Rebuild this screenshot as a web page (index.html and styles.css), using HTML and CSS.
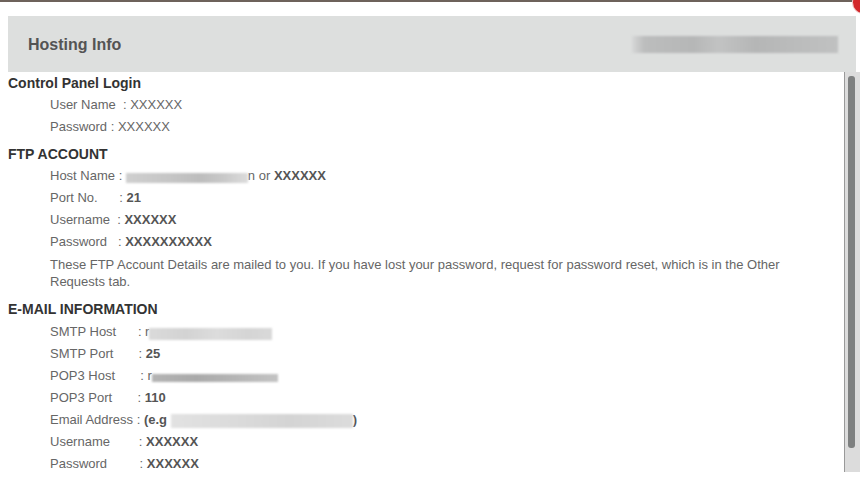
FILE: index.html
```html
<!doctype html>
<html>
  <head>
    <link rel="stylesheet" href="styles.css">
  </head>
  <body>
    <div class="topline"></div>
    <span class="close-dot"></span>

    <div class="panel-head">
      <h2>Hosting Info</h2>
      <span class="blur blur-domain"></span>
    </div>

    <div class="panel-body">
      <div class="content">
        <div class="section">
          <h3>Control Panel Login</h3>
          <div class="row">User Name&nbsp; : XXXXXX</div>
          <div class="row">Password : XXXXXX</div>
        </div>

        <div class="section">
          <h3>FTP ACCOUNT</h3>
          <div class="row">Host Name : <span class="blur blur-ftp"></span>n or <b>XXXXXX</b></div>
          <div class="row">Port No.&nbsp;&nbsp;&nbsp;&nbsp;&nbsp;&nbsp;: <b>21</b></div>
          <div class="row">Username&nbsp;&nbsp;: <b>XXXXXX</b></div>
          <div class="row">Password&nbsp;&nbsp;&nbsp;: <b>XXXXXXXXXX</b></div>
          <p class="note">These FTP Account Details are mailed to you. If you have lost your password, request for password reset, which is in the Other Requests tab.</p>
        </div>

        <div class="section">
          <h3>E-MAIL INFORMATION</h3>
          <div class="row">SMTP Host&nbsp;&nbsp;&nbsp;&nbsp;&nbsp;&nbsp;: r<span class="blur blur-smtp"></span></div>
          <div class="row">SMTP Port&nbsp;&nbsp;&nbsp;&nbsp;&nbsp;&nbsp;&nbsp;: <b>25</b></div>
          <div class="row">POP3 Host&nbsp;&nbsp;&nbsp;&nbsp;&nbsp;&nbsp;&nbsp;: r<span class="blur blur-pop"></span></div>
          <div class="row">POP3 Port&nbsp;&nbsp;&nbsp;&nbsp;&nbsp;&nbsp;&nbsp;: <b>110</b></div>
          <div class="row">Email Address : <b>(e.g <span class="blur blur-mail"></span>)</b></div>
          <div class="row">Username&nbsp;&nbsp;&nbsp;&nbsp;&nbsp;&nbsp;&nbsp;&nbsp;: <b>XXXXXX</b></div>
          <div class="row">Password&nbsp;&nbsp;&nbsp;&nbsp;&nbsp;&nbsp;&nbsp;&nbsp;&nbsp;: <b>XXXXXX</b></div>
        </div>
      </div>

      <div class="scrollbar">
        <div class="thumb"></div>
      </div>
    </div>
  </body>
</html>
```

FILE: styles.css
```css
* {
  box-sizing: border-box;
}

html {
  height: 100%;
}

body {
  margin: 0;
  height: 100%;
  background-color: #fff;
  font-family: "Liberation Sans", Arial, sans-serif;
  overflow: hidden;
  position: relative;
}

.topline {
  height: 2px;
  margin-right: 4px;
  background-color: #6d625b;
}

.close-dot {
  position: absolute;
  top: -8px;
  right: -14px;
  width: 21px;
  height: 21px;
  border-radius: 50%;
  background-color: #d3272a;
  box-shadow: 0 0 0 1px #f1c9c9;
}

.panel-head {
  display: flex;
  align-items: center;
  justify-content: space-between;
  height: 56px;
  margin: 14px 4px 0 8px;
  padding: 2px 18px 0 20px;
  background-color: #dddfde;
}

.panel-head h2 {
  margin: 0;
  font-size: 16px;
  font-weight: bold;
  color: #545454;
}

.panel-head .blur {
  margin-bottom: 2px;
}

.panel-body {
  display: flex;
  height: 400px;
}

.content {
  flex: 1;
  overflow: hidden;
  padding: 0 20px 0 8px;
}

.section h3 {
  margin: 5px 0 0;
  font-size: 14px;
  line-height: 22px;
  font-weight: bold;
  color: #333;
}

.section:first-child h3 {
  margin-top: 0;
}

.section:last-child h3 {
  margin-top: 8px;
  margin-bottom: 1px;
}

.row {
  padding-left: 42px;
  font-size: 13px;
  line-height: 22px;
  color: #666;
  white-space: nowrap;
}

.row b {
  color: #555;
}

.note {
  margin: 3px 0 0;
  padding-left: 42px;
  font-size: 13px;
  line-height: 17px;
  color: #666;
}

/* blurred-out values */
.blur {
  display: inline-block;
  filter: blur(1px);
}

.blur-domain {
  width: 206px;
  height: 17px;
  background: linear-gradient(90deg, #d6d7d7 0%, #bcbdbd 6%, #b6b7b7 30%, #c2c3c3 42%, #b5b6b6 60%, #bbbcbc 80%, #c0c1c1 100%);
}

.blur-ftp {
  width: 122px;
  height: 10px;
  vertical-align: -3px;
  background: linear-gradient(90deg, #cfcfcf 0%, #c6c6c6 35%, #bdbdbd 60%, #c9c9c9 80%, #dcdcdc 100%);
}

.blur-smtp {
  width: 123px;
  height: 12px;
  vertical-align: -4px;
  background: linear-gradient(90deg, #dadada 0%, #d3d3d3 30%, #dcdcdc 55%, #d5d5d5 80%, #d9d9d9 100%);
}

.blur-pop {
  width: 126px;
  height: 8px;
  vertical-align: -2px;
  background: linear-gradient(90deg, #b4b4b4 0%, #a9a9a9 35%, #b3b3b3 60%, #bdbdbd 85%, #c3c3c3 100%);
}

.blur-mail {
  width: 182px;
  height: 14px;
  vertical-align: -4px;
  background: linear-gradient(90deg, #e2e2e2 0%, #dadada 40%, #d4d4d4 65%, #dcdcdc 100%);
}

.scrollbar {
  width: 16px;
  padding: 4px 5px 24px 3px;
  border-left: 1px solid #999;
  background-color: #dcdcdc;
}

.thumb {
  height: 100%;
  border-radius: 3px;
  background-color: #7e8080;
}
```
